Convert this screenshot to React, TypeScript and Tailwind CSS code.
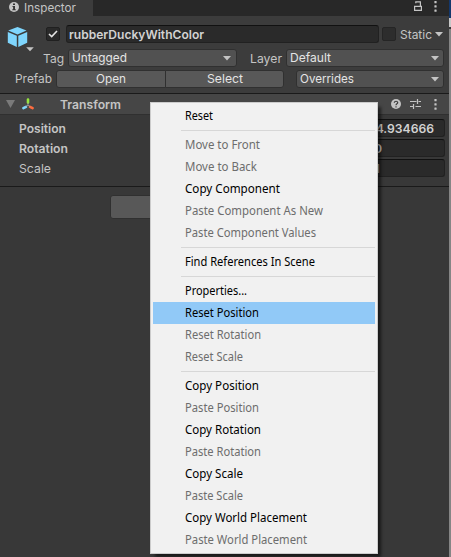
import React from "react";

const ROW = "flex shrink-0 items-center";
const FIELD =
  "flex h-[18px] items-center rounded-[3px] border border-[#212121] border-t-[#111111] bg-[#2a2a2a] text-[#d2d2d2]";
const BUTTON =
  "flex h-[18px] items-center border border-[#303030] bg-[#585858] text-[#e4e4e4]";
const DROPDOWN =
  "flex h-[18px] items-center justify-between rounded-[3px] border border-[#303030] bg-[#515151] text-[#e4e4e4]";

function T({ w, children, bold, low }: { w: number; children: string; bold?: boolean; low?: boolean }) {
  return (
    <svg width={w} height="16" className="block shrink-0 overflow-visible" fill="currentColor">
      <text
        x="0"
        y={low ? 13 : 12}
        textLength={w}
        lengthAdjust="spacingAndGlyphs"
        className={bold ? "text-[12px] font-semibold" : "text-[12px]"}
      >
        {children}
      </text>
    </svg>
  );
}

function Arrow() {
  return (
    <svg width="8" height="5" viewBox="0 0 8 5" className="shrink-0" fill="#c4c4c4">
      <path d="M0 0h8L4 4.6z" />
    </svg>
  );
}

function Dots() {
  return (
    <svg width="3" height="11" viewBox="0 0 3 11" className="shrink-0" fill="#c4c4c4">
      <rect x=".4" y="0" width="2.2" height="2.2" rx=".5" />
      <rect x=".4" y="4.3" width="2.2" height="2.2" rx=".5" />
      <rect x=".4" y="8.6" width="2.2" height="2.2" rx=".5" />
    </svg>
  );
}

type Item = { label: string; w: number; on?: boolean; hot?: boolean } | null;

const ITEMS: Item[] = [
  { label: "Reset", w: 28, on: true },
  null,
  { label: "Move to Front", w: 75 },
  { label: "Move to Back", w: 72 },
  { label: "Copy Component", w: 95, on: true },
  { label: "Paste Component As New", w: 138 },
  { label: "Paste Component Values", w: 131 },
  null,
  { label: "Find References In Scene", w: 130, on: true },
  null,
  { label: "Properties...", w: 62, on: true },
  { label: "Reset Position", w: 74, on: true, hot: true },
  { label: "Reset Rotation", w: 76 },
  { label: "Reset Scale", w: 58 },
  null,
  { label: "Copy Position", w: 74, on: true },
  { label: "Paste Position", w: 74 },
  { label: "Copy Rotation", w: 76, on: true },
  { label: "Paste Rotation", w: 76 },
  { label: "Copy Scale", w: 58, on: true },
  { label: "Paste Scale", w: 58 },
  { label: "Copy World Placement", w: 122, on: true },
  { label: "Paste World Placement", w: 122 },
];

function Menu() {
  return (
    <div className="absolute left-[150px] top-[102px] h-[452px] w-[228px] border border-[#cccccc] bg-[#f1f1f1] px-[2px] py-[2px] font-['Noto_Sans',sans-serif] shadow-[4px_4px_3px_-1px_rgba(0,0,0,0.55)]">
      {ITEMS.map((it, i) =>
        it ? (
          <div
            key={i}
            className={
              "flex h-[22px] w-[222px] items-center pl-[32px] " +
              (it.hot ? "bg-[#91c9f7] " : "") +
              (it.on ? "text-black" : "text-[#6d6d6d]")
            }
          >
            <T w={it.w}>{it.label}</T>
          </div>
        ) : (
          <div key={i} className="ml-[28px] flex h-[7px] w-[194px] items-center">
            <div className="h-px w-full bg-[#d7d7d7]" />
          </div>
        )
      )}
    </div>
  );
}

export default function App() {
  return (
    <div className="relative flex h-[557px] w-[451px] overflow-hidden bg-[#383838] font-['Inter',sans-serif] text-[#c4c4c4]">
      <div className="flex w-[449px] flex-col">
        <div className="flex h-4 shrink-0 bg-[#282828]">
          <div className="flex w-[93px] items-center gap-[5px] bg-[#3c3c3c] pl-[9px]">
            <svg width="10" height="10" viewBox="0 0 10 10" className="mt-[-2px] shrink-0">
              <circle cx="5" cy="5" r="5" fill="#c4c4c4" />
              <path d="M4 1.5h2v1.6H4zM3.5 4H6v3.2h.8v1H3.3v-1h.8V5h-.6z" fill="#333" />
            </svg>
            <T w={52}>Inspector</T>
          </div>
          <div className="flex grow items-center justify-end gap-[12px] pb-[4px] pr-[12px]">
            <svg width="8" height="10" viewBox="0 0 8 10" fill="none" stroke="#c4c4c4" strokeWidth="1.2">
              <path d="M.6 5.4h6.8v4H.6zM1.8 2.2V.8h4.6v4.6" />
            </svg>
            <Dots />
          </div>
        </div>
        <div className="flex h-[77px] shrink-0 flex-col bg-[#3c3c3c]">
          <div className={ROW + " mt-[9px] h-[18px]"}>
            <div className="relative ml-[7px] h-[24px] w-[39px]">
              <svg width="28" height="28" viewBox="0 0 28 28" className="absolute left-0 top-[5px]">
                <path d="M10.5 0 19.5 3.5 10.5 7.6 1.2 3.5z" fill="#7fd6fd" />
                <path d="M.8 5 9.8 8.8V20L.8 15.8zM11.3 8.8 20.2 5v10.8L11.3 20z" fill="#7fd6fd" />
                <path d="M19.2 20.2h7.6L23 24.2z" fill="#c4c4c4" />
              </svg>
            </div>
            <div className="flex h-[14px] w-[14px] items-center justify-center rounded-[2px] border border-[#202020] bg-[#2a2a2a]">
              <svg width="10" height="8" viewBox="0 0 10 8" fill="none" stroke="#e4e4e4" strokeWidth="1.6">
                <path d="M1 4 3.7 6.6 9 1" />
              </svg>
            </div>
            <div className={FIELD + " ml-[6px] w-[313px] pl-[2px]"}>
              <T w={135} bold low>rubberDuckyWithColor</T>
            </div>
            <div className="ml-[3px] mr-[4px] h-[14px] w-[14px] rounded-[2px] border border-[#252525] bg-[#2d2d2d]" />
            <T w={32} low>Static</T>
            <div className="ml-[3px]"><Arrow /></div>
          </div>
          <div className={ROW + " mt-[6px] h-[18px]"}>
            <div className="ml-[43px] w-[25px]"><T w={21} low>Tag</T></div>
            <div className={DROPDOWN + " w-[169px] pl-[3px] pr-[5px]"}>
              <T w={55}>Untagged</T><Arrow />
            </div>
            <div className="ml-[13px] w-[36px]"><T w={32} low>Layer</T></div>
            <div className={DROPDOWN + " w-[158px] pl-[3px] pr-[4px]"}>
              <T w={41}>Default</T><Arrow />
            </div>
          </div>
          <div className={ROW + " mt-[3px] h-[18px]"}>
            <div className="ml-[15px] w-[41px]"><T w={37}>Prefab</T></div>
            <div className={BUTTON + " w-[110px] justify-center rounded-l-[3px]"}><T w={30}>Open</T></div>
            <div className={BUTTON + " -ml-px w-[119px] justify-center rounded-r-[3px]"}><T w={36}>Select</T></div>
            <div className={DROPDOWN + " ml-[12px] w-[148px] pl-[3px] pr-[4px]"}>
              <T w={54}>Overrides</T><Arrow />
            </div>
          </div>
        </div>
        <div className="flex h-[22px] shrink-0 items-center border-y border-b-[#303030] border-t-[#1a1a1a] bg-[#464646]">
          <svg width="9" height="8" viewBox="0 0 9 8" className="ml-[6px]" fill="#7a7a7a"><path d="M0 0h9L4.5 8z" /></svg>
          <svg width="14" height="13" viewBox="0 0 14 13" className="ml-[6px]" fill="none" strokeWidth="2.6" strokeLinecap="round">
            <path d="M7 1.6v3" stroke="#98e83f" />
            <path d="M5 8.8 2.4 10.2" stroke="#7fd6fd" />
            <path d="M9 8.8 11.6 10.2" stroke="#ff6b3d" />
            <path d="M7 5v2.2L5 8.4M7 7.2l2 1.2" stroke="#a0a0a0" strokeWidth=".8" />
          </svg>
          <div className="ml-[25px] grow"><T w={61} bold low>Transform</T></div>
          <svg width="10" height="10" viewBox="0 0 10 10" className="mr-[9px]">
            <circle cx="5" cy="5" r="5" fill="#c4c4c4" />
            <path d="M3.3 3.8C3.3 1.7 6.8 1.8 6.7 3.7 6.7 4.8 5 4.8 5 6.2M5 7.2v1.3" fill="none" stroke="#3c3c3c" strokeWidth="1.2" />
          </svg>
          <svg width="11" height="10" viewBox="0 0 11 10" className="mr-[13px]" fill="none" stroke="#c4c4c4" strokeWidth="1.2">
            <path d="M0 2.5h6.5M8.5 2.5H11M7.5 0v5M0 7.5h3.5M5.5 7.5H11M3.5 5v5" />
          </svg>
          <div className="mr-[12px]"><Dots /></div>
        </div>
        <div className="flex h-[71px] shrink-0 flex-col gap-[2px] pl-[19px] pt-[4px]">
          <div className="flex h-[18px] items-center">
            <div className="w-[251px]"><T w={47} bold low>Position</T></div>
            <div className={FIELD + " w-[175px] justify-end pr-[10px]"}><T w={66} bold low>54.934666</T></div>
          </div>
          <div className="flex h-[18px] items-center">
            <div className="w-[251px]"><T w={49} bold low>Rotation</T></div>
            <div className={FIELD + " w-[175px] pl-[103px]"}><T w={8} bold low>0</T></div>
          </div>
          <div className="flex h-[18px] items-center">
            <div className="w-[251px]"><T w={32} low>Scale</T></div>
            <div className={FIELD + " w-[175px] pl-[104px]"}><T w={5} low>1</T></div>
          </div>
        </div>
        <div className="h-px shrink-0 bg-[#1a1a1a]" />
        <div className={BUTTON + " ml-[110px] mt-[8px] h-[24px] w-[230px] rounded-[3px]"} />
      </div>
      <div className="flex w-[2px] flex-col bg-[#858585]">
        <div className="h-[18px] bg-[#14386c]" />
        <div className="h-[9px] bg-[#c8c8c8]" />
        <div className="h-[2px] bg-[#3a3a3a]" />
      </div>
      <Menu />
    </div>
  );
}
